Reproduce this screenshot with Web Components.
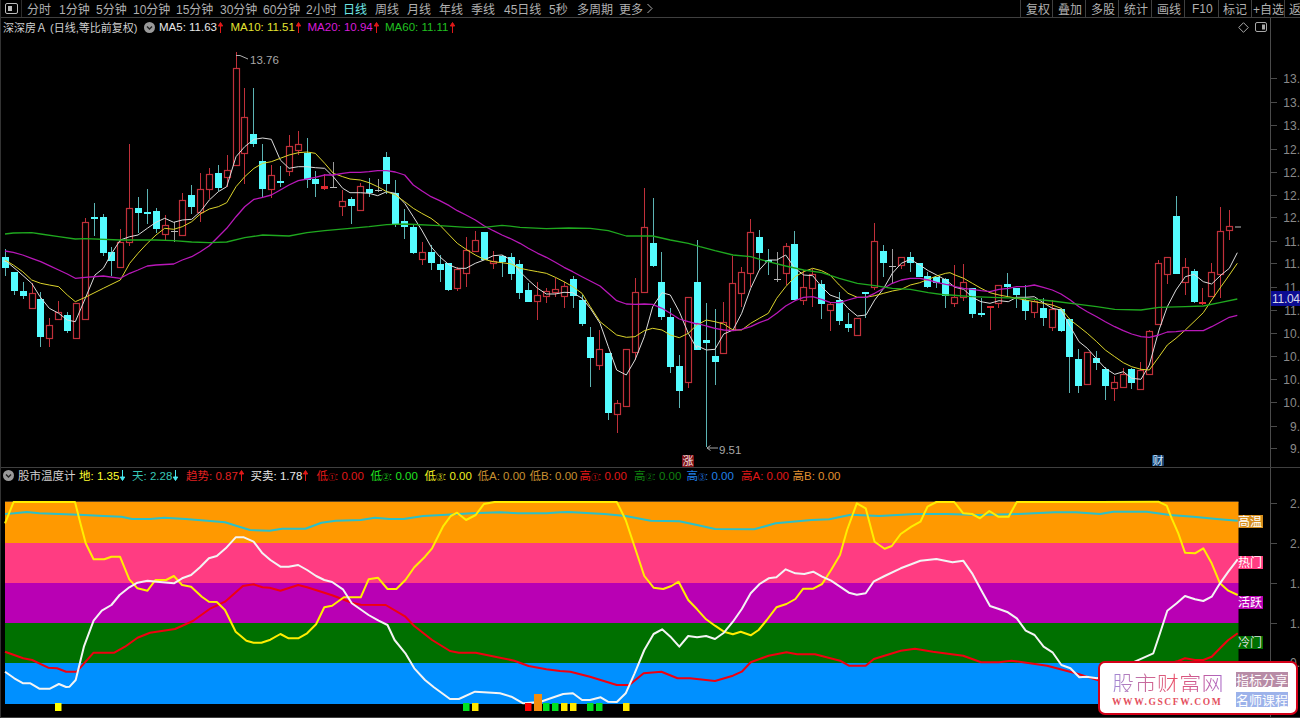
<!DOCTYPE html>
<html lang="zh-CN"><head><meta charset="utf-8"><title>股市温度计</title>
<style>html,body{margin:0;padding:0;background:#000;overflow:hidden}stock-app{display:block}</style></head>
<body><stock-app></stock-app>
<script>
const FONT='"Liberation Sans","Noto Sans CJK SC",sans-serif';
const seg=(ox,oy,sx,sy,a)=>{const r=[];for(let i=0;i<a.length;i+=2)r.push([ox+a[i]/sx,oy+a[i+1]/sy]);return r;};
const poly=(segs)=>{let last=-1,out=[];for(const s of segs)for(const p of s){if(p[0]>last){out.push(p[0].toFixed(1)+','+p[1].toFixed(1));last=p[0];}}return out.join(' ');};

/* ---------- candles: type, high, bodyTop, bodyBottom, low ---------- */
const K=[['c',249,257,268,276],['c',272,272,291,295],['c',282,291,296,299],['r',283,293,308,308],['c',292,299,337,347],['r',318,325,338,347],['r',301,312,319,319],['c',312,315,331,333],['r',303,303,338,339],['r',218,222,319,319],
['c',203,217,218,236],['c',214,217,253,256],['c',247,252,261,276],['r',229,242,267,267],['r',144,208,242,246],['c',197,208,213,233],['c',189,212,213,224],['c',208,211,229,233],['r',215,225,234,241],['g',222,231,232,242],
['r',193,200,235,235],['c',185,195,207,214],['r',173,189,212,222],['r',168,174,189,199],['c',165,173,188,191],['r',155,170,177,187],['r',52,68,165,165],['r',88,117,153,184],['c',88,134,144,147],['c',144,161,189,197],
['r',165,175,189,198],['c',166,181,183,187],['r',135,146,171,176],['r',131,144,150,155],['c',138,153,180,188],['c',171,179,184,197],['R',174,186,189,190],['g',162,187,188,188],['r',190,201,206,216],['c',197,199,206,224],
['r',183,186,210,210],['c',178,189,193,197],['g',179,190,191,192],['c',152,157,184,194],['c',180,193,224,227],['c',209,221,227,239],['c',225,227,253,254],['r',242,252,259,265],['c',245,252,263,270],['c',255,264,270,282],
['c',263,263,290,291],['r',267,269,288,291],['r',237,250,273,287],['r',231,240,251,251],['c',232,232,260,260],['r',251,261,263,269],['c',255,256,262,277],['c',253,257,274,280],['c',260,264,293,299],['c',283,290,302,302],
['r',282,295,301,320],['r',288,291,296,303],['r',278,289,292,297],['r',282,286,296,308],['c',276,279,296,308],['c',295,300,324,326],['c',327,337,358,387],['r',330,349,365,370],['c',353,353,413,420],['r',400,403,414,433],
['r',349,349,406,407],['r',278,292,352,360],['r',188,227,292,292],['c',198,243,266,267],['c',252,282,317,320],['c',308,317,367,373],['c',355,366,391,408],['r',297,297,382,388],['c',240,282,350,350],['c',303,340,343,447],
['c',309,356,362,385],['r',302,322,353,353],['r',256,283,330,330],['r',267,272,293,307],['r',219,232,273,287],['c',230,237,253,270],['c',249,260,262,275],['g',252,279,280,282],['r',243,246,273,285],['c',231,244,300,300],
['r',270,287,300,305],['r',269,274,288,307],['c',280,284,304,319],['r',303,304,310,331],['c',292,300,321,325],['c',313,324,328,332],['r',318,318,335,335],['c',292,292,294,318],['r',223,241,287,290],['c',245,251,263,277],
['g',249,266,267,283],['r',257,257,265,269],['c',252,257,263,272],['c',263,263,277,277],['c',272,276,287,288],['c',277,277,283,288],['c',278,279,296,308],['r',265,297,303,307],['r',264,282,297,301],['c',288,288,314,318],
['c',298,313,315,317],['R',306,306,307,330],['r',285,285,303,308],['c',273,284,287,297],['c',288,288,295,308],['c',285,300,311,320],['r',300,301,312,318],['c',298,308,318,326],['r',300,309,327,331],['c',308,309,331,332],
['c',318,319,357,393],['c',349,359,386,393],['r',352,352,384,384],['c',351,358,363,370],['c',367,369,386,400],['r',376,382,388,401],['r',368,374,387,387],['c',368,369,383,389],['r',362,370,389,389],['r',330,331,374,374],
['r',260,263,324,324],['r',257,257,274,284],['c',196,216,274,274],['r',258,267,282,295],['c',269,271,302,303],['R',288,302,303,305],['r',263,272,296,297],['r',207,231,274,298],['r',210,226,230,240]];

/* ---------- moving averages, traced ---------- */
const MA=[
 ['#dcdcdc',1,poly([seg(0,60,3,3,[10,603,20,605,50,630,95,670,120,710,148,745,176,760,202,780,226,785,256,715,285,645,310,625,335,580,361,540,389,530,414,525,442,505,468,487,494,475,521,487,547,480,575,478,601,455,628,420,655,395,680,380,708,290,734,260,762,238,788,234,814,238,841,300,867,325,895,320,921,320,946,323,974,325,1000,350,1028,385,1050,398]),
  seg(350,140,3,3,[0,155,31,158,57,160,83,167,110,155,136,160,164,190,190,230,215,270,243,320,269,350,298,375,322,385,348,385,376,370,402,360,430,347,456,345,484,360,510,395,535,420,563,445,589,462,616,462,642,457,668,458,696,475,721,505,750,550,775,620,800,690,829,705,855,660,883,590,908,500,936,458,961,465,988,515,1015,580,1040,625]),
  seg(600,180,3,3,[291,497,319,510,345,508,371,462,399,450,425,400,452,325,478,270,505,240,530,240,557,225,585,265,611,285,638,287,665,320,690,345,718,355,744,385,772,408,798,405,824,360,851,325,877,280,904,250,931,238,959,255,985,272,1010,285,1037,300,1050,310]),
  seg(950,180,3,3,[15,322,41,328,67,352,93,365,120,370,147,362,175,365,200,352,226,352,253,350,280,368,307,385,333,390,361,440,387,485,412,505,440,537,466,565,494,583,520,575,545,595,573,598,598,555,627,450,652,380,678,330,706,290,732,283,760,305,785,312,813,285,838,265,862,218])])],
 ['#dcd42c',1,poly([seg(0,60,3,3,[15,600,40,615,68,635,95,660,122,670,148,675,176,680,202,705,226,725,256,712,310,685,361,660,389,610,414,580,442,550,468,525,494,505,521,508,547,500,575,485,601,462,628,447,655,440,680,428,708,380,734,350,762,325,788,310,814,305,841,295,867,285,895,278,921,276,946,280,974,310,1000,340,1028,350,1050,357]),
  seg(350,140,3,3,[0,118,31,120,57,128,83,140,110,155,136,165,164,185,190,205,215,220,243,235,269,255,298,285,322,310,348,328,376,345,402,358,430,365,456,368,484,372,510,385,535,390,563,395,589,400,616,412,642,425,668,440,696,460,721,500,750,545,775,565,800,585,829,592,855,590,883,572,908,565,936,570,961,585,988,593,1015,580,1040,555]),
  seg(600,180,3,3,[291,435,319,420,345,425,371,432,399,450,425,450,452,430,478,415,505,400,530,355,557,320,585,290,611,275,638,265,665,272,690,285,718,315,744,340,772,352,798,352,824,347,851,340,877,333,904,328,931,315,959,308,985,298,1010,288,1037,280,1050,278]),
  seg(950,180,3,3,[15,285,41,295,67,310,93,325,120,338,147,345,175,350,200,355,226,360,253,365,280,370,307,375,333,385,361,420,387,440,412,460,440,485,466,510,494,530,520,548,545,560,573,568,598,570,627,530,652,495,678,475,706,450,732,425,760,398,785,360,813,320,838,285,862,250])])],
 ['#b818b8',1.3,poly([seg(0,60,3,3,[15,573,40,577,68,585,95,595,122,605,148,617,176,630,202,642,226,655,256,652,310,648,361,655,389,640,414,630,442,618,468,615,521,612,547,600,575,590,601,575,628,557,655,530,680,505,708,470,734,440,762,418,788,412,814,405,841,390,867,375,895,362,921,357,946,352,974,345,1000,345,1028,340,1050,337]),
  seg(350,140,3,3,[0,97,31,97,57,95,83,92,110,92,136,96,164,105,190,135,215,152,243,170,269,182,298,197,322,212,348,225,376,240,402,257,430,272,456,285,484,297,510,310,535,325,563,340,589,352,616,367,642,382,668,395,696,410,721,423,750,438,775,460,800,482,829,492,855,493,883,492,908,493,936,505,961,520,988,537,1015,545,1040,552]),
  seg(600,180,3,3,[291,430,319,438,345,445,371,450,399,452,425,448,452,440,478,428,505,418,530,400,557,378,585,362,611,352,638,350,665,358,690,367,718,368,744,360,772,352,798,352,824,340,851,325,877,310,904,300,931,295,959,295,985,300,1010,307,1037,313,1050,315]),
  seg(950,180,3,3,[15,320,41,325,67,328,93,332,120,335,147,328,175,325,200,320,226,320,253,315,280,322,307,330,333,342,361,360,387,380,412,395,440,410,466,425,494,440,520,452,545,462,573,470,598,472,627,465,652,456,678,455,706,452,732,452,760,452,785,440,813,425,838,412,862,406])])],
 ['#1fa81f',1.3,poly([seg(0,60,3,3,[15,522,40,519,95,518,122,522,176,530,226,537,256,536,361,540,468,540,521,542,575,546,628,548,680,546,734,533,788,525,867,528,921,518,974,512,1050,505]),
  seg(350,140,3,3,[0,265,57,260,110,254,164,252,269,257,350,262,402,262,456,256,510,262,589,266,656,264,721,265,775,272,829,288,908,288,961,300,1015,310,1050,320]),
  seg(600,180,3,3,[291,198,345,212,399,225,452,230,505,245,557,258,611,270,665,278,718,295,772,310,824,317,877,325,931,328,985,338,1037,345,1050,345]),
  seg(950,180,3,3,[67,350,147,353,226,355,307,363,387,373,440,380,494,388,573,390,627,382,706,380,760,378,813,367,862,357])])]
];

/* ---------- indicator lines, traced ---------- */
const LINES={
 teal:poly([seg(0,490,2.8,3,[14,72,40,70,75,66,110,70,220,74,290,78,340,80,370,87,420,87,460,83,520,87,580,92,630,97,670,110,700,120,755,122,790,116,855,116,900,98,940,92,1010,90,1050,83,1090,87,1130,87,1185,78,1250,74,1320,70,1400,67,1450,70,1530,70,1568,67]),
  seg(540,490,2.8,3,[80,66,180,72,240,78,310,92,390,94,440,105,490,117,600,118,660,100,760,90,810,88,870,74,950,78,1050,72,1140,72,1230,75,1340,72,1440,67,1500,67,1568,72]),
  seg(1080,500,3,3,[100,35,200,35,270,45,340,50,410,57,473,62])]),
 red:poly([seg(0,490,2.8,3,[14,485,65,505,90,510,135,533,160,535,185,545,215,545,262,488,320,488,350,470,385,443,420,428,490,417,540,393,590,355,630,335,680,288,710,283,735,292,755,293,785,302,835,285,860,292,930,316,985,338,1010,344,1080,345,1135,380,1160,408,1210,450,1260,483,1285,488,1332,488,1400,503,1440,512,1480,528,1530,538,1568,543]),
  seg(540,490,2.8,3,[85,545,140,560,215,585,250,585,290,550,340,545,385,565,420,565,490,573,540,557,565,545,590,517,640,497,690,487,720,493,770,493,840,512,865,527,912,527,935,507,1010,482,1050,476,1100,485,1185,497,1235,517,1285,517,1320,512,1420,527,1500,550,1568,572]),
  seg(1080,500,3,3,[295,483,315,475,345,480,370,480,395,470,420,445,445,420,473,400])]),
 yellow:poly([seg(0,490,2.8,3,[14,100,38,36,210,36,225,100,240,160,262,208,292,208,312,200,336,200,362,268,385,295,413,302,435,270,465,270,487,258,510,285,535,290,565,320,585,335,607,336,630,360,660,425,690,452,710,458,732,458,757,449,785,432,808,445,835,445,860,430,885,403,908,352,930,347,963,322,1010,322,1032,268,1058,263,1085,297,1110,297,1135,270,1160,232,1190,200,1210,175,1240,110,1262,78,1280,68,1305,90,1332,75,1355,42,1385,36,1568,36]),
  seg(540,490,2.8,3,[215,36,240,90,265,170,292,258,318,293,345,297,368,288,388,275,415,330,440,358,465,388,490,407,515,425,540,433,562,425,590,436,612,420,635,390,662,352,690,342,715,327,737,296,765,296,790,282,815,240,840,195,860,120,887,40,912,55,937,155,965,176,985,168,1010,132,1040,110,1065,95,1085,50,1110,36,1160,36,1185,70,1210,72,1232,85,1258,63,1283,80,1312,80,1335,36,1568,36]),
  seg(1080,500,3,3,[235,5,260,17,275,55,295,100,315,158,345,160,370,145,395,190,420,250,445,272,473,285])]),
 white:poly([seg(0,490,2.8,3,[14,545,40,565,65,580,85,580,110,596,140,596,165,582,185,591,195,590,212,570,235,470,262,392,285,362,312,345,335,315,362,292,385,278,413,272,440,275,487,280,510,265,535,255,560,232,585,205,607,198,632,175,660,142,683,142,710,155,735,190,757,210,785,230,808,230,835,225,860,240,885,258,908,270,930,276,960,298,985,340,1032,375,1060,392,1085,405,1105,450,1135,490,1160,535,1190,570,1215,592,1260,627,1285,627,1330,605,1355,607,1400,610,1432,620,1465,640]),
  seg(540,490,2.8,3,[0,636,30,625,65,612,92,610,118,630,140,630,170,622,190,635,215,636,240,610,265,550,292,480,318,432,342,418,365,440,390,470,415,438,440,442,465,438,490,447,515,428,540,395,565,357,590,310,615,282,640,265,662,262,688,238,715,250,740,252,765,245,790,260,815,272,840,290,865,308,887,314,912,310,935,274,965,258,1010,235,1065,212,1110,207,1155,217,1185,212,1210,250,1235,300,1260,348,1285,357,1310,367,1335,385,1360,422,1385,435,1410,470,1435,487,1460,525,1485,535,1510,562,1530,560,1560,565]),
  seg(1080,500,3,3,[220,460,240,400,262,332,290,310,315,288,345,298,370,303,395,290,420,250,445,215,473,178])])
};

/* ---------- small elements ---------- */
class LegendTag extends HTMLElement{
  connectedCallback(){
    const c=this.getAttribute('c')||'#ccc',w=this.getAttribute('w'),ar=this.getAttribute('arrow'),ac=this.getAttribute('ac')||'#e01818';
    const arrow=ar==='up'?`<svg width="5" height="11" viewBox="0 0 5 11"><path d="M2.5 11V1M.3 4L2.5.5 4.7 4z" fill="${ac}" stroke="${ac}" stroke-width="1"/></svg>`
      :ar==='down'?`<svg width="5" height="11" viewBox="0 0 5 11"><path d="M2.5 0V10M.3 7L2.5 10.5 4.7 7z" fill="${ac}" stroke="${ac}" stroke-width="1"/></svg>`:'';
    this.attachShadow({mode:'open'}).innerHTML=`<style>:host{display:flex;align-items:center;flex:0 0 ${w}px;width:${w}px;color:${c};white-space:nowrap;gap:1px}
      svg{display:block}</style><span><slot></slot></span>${arrow}`;
  }
}
customElements.define('legend-tag',LegendTag);

class ToolBar extends HTMLElement{
  connectedCallback(){
    const L=[['分时',32],['1分钟',37],['5分钟',37],['10分钟',43],['15分钟',44],['30分钟',43],['60分钟',43],['2小时',37],['日线',32,1],['周线',32],['月线',32],['年线',32],['季线',33],['45日线',45],['5秒',28],['多周期',42],['更多',27]];
    const R=[['复权',5],['叠加',5],['多股',5],['统计',5],['画线',5],['F10',7],['标记',4],['+自选',1],['返',4]];
    const W=[32,33,33,33,33,34,33,33,16];
    this.attachShadow({mode:'open'}).innerHTML=`<style>
      :host{display:flex;height:17px;border-bottom:1px solid #3f3f3f;color:#b0b0b0;font:12px ${FONT};align-items:stretch;overflow:hidden;flex:none}
      .ic{flex:0 0 21px;display:flex;align-items:center;padding-left:4px;box-sizing:border-box;border-right:1px solid #2c2c2c}
      .tabs{display:flex;align-items:center;padding-left:5px}
      .tabs span{white-space:nowrap;flex:none}
      .on{color:#6fe6e6}
      .chev{display:block;margin-left:0}
      .right{margin-left:auto;display:flex}
      .right span{border-left:1px solid #3f3f3f;display:flex;align-items:center;box-sizing:border-box;white-space:nowrap;flex:none}
    </style>
    <div class="ic"><svg width="13" height="11" viewBox="0 0 13 11"><rect x=".5" y=".5" width="12" height="10" rx="1.5" fill="none" stroke="#bbb"/><rect x="3" y="3" width="4" height="5" fill="#bbb"/></svg></div>
    <div class="tabs">${L.map(t=>`<span class="${t[2]?'on':''}" style="width:${t[1]}px">${t[0]}</span>`).join('')}
      <svg class="chev" width="8" height="11" viewBox="0 0 8 11"><path d="M1.5 1L6 5.5 1.5 10" fill="none" stroke="#b0b0b0"/></svg></div>
    <div class="right">${R.map((t,i)=>`<span style="width:${W[i]}px;padding-left:${t[1]}px">${t[0]}</span>`).join('')}</div>`;
  }
}
customElements.define('tool-bar',ToolBar);

/* value axis: real text on a free scale */
class ValueAxis extends HTMLElement{
  connectedCallback(){
    const top=+this.getAttribute('top'),h=+this.getAttribute('h');
    const ticks=JSON.parse(this.getAttribute('ticks'));
    const tag=this.getAttribute('tag');
    let s=ticks.map(t=>`<line x1="0" x2="6" y1="${t[0]+.5}" y2="${t[0]+.5}" stroke="#4a4a4a"/><text x="29" y="${t[0]+4.5}" text-anchor="end" fill="#8a8a8a">${t[1]}</text>`).join('');
    if(tag)s+=`<rect x="0" y="291" width="29" height="15" fill="#0c0c92"/><text x="1" y="303" fill="#d8d8e8" textLength="28">${tag}</text>`;
    this.attachShadow({mode:'open'}).innerHTML=`<style>:host{display:block;flex:0 0 29px;width:29px;border-left:1px solid #4a4a4a;overflow:hidden}
      svg{display:block;font:12px ${FONT}}</style><svg width="29" height="${h}" viewBox="0 ${top} 29 ${h}">${s}</svg>`;
  }
}
customElements.define('value-axis',ValueAxis);

class PricePanel extends HTMLElement{
  connectedCallback(){
    const xs=i=>5+8.87*i;
    let c='';
    K.forEach((k,i)=>{
      const x=xs(i),cx=Math.round(x)+.5,[t,hi,top,bot,lo]=k,l=Math.round(x-3)+.5;
      if(t==='c'){
        c+=`<line x1="${cx}" x2="${cx}" y1="${hi}" y2="${lo}" stroke="#5cb4b4"/><rect x="${l-.5}" y="${top}" width="7" height="${Math.max(bot-top,2)}" fill="#54fcff"/>`;
      }else if(t==='g'){
        c+=`<line x1="${cx}" x2="${cx}" y1="${hi}" y2="${lo}" stroke="#9a9a9a"/><line x1="${l-.5}" x2="${l+6.5}" y1="${top+.5}" y2="${top+.5}" stroke="#b8b8b8"/>`;
      }else if(t==='R'){
        c+=`<line x1="${cx}" x2="${cx}" y1="${hi}" y2="${lo}" stroke="#c0303a"/><rect x="${l-.5}" y="${top}" width="7" height="${Math.max(bot-top,2)}" fill="#e02830"/>`;
      }else{
        if(hi<top)c+=`<line x1="${cx}" x2="${cx}" y1="${hi}" y2="${top}" stroke="#c0303a"/>`;
        if(lo>bot)c+=`<line x1="${cx}" x2="${cx}" y1="${bot}" y2="${lo}" stroke="#c0303a"/>`;
        c+=`<rect x="${l}" y="${top+.5}" width="6" height="${bot-top}" fill="#000" stroke="#c0303a" stroke-width="1.2"/>`;
      }
    });
    const lines=MA.map(([col,w,p])=>`<polyline points="${p}" fill="none" stroke="${col}" stroke-width="${w}" stroke-linejoin="round"/>`).join('');
    const ticks=[[78,'13.'],[102,'13.'],[125,'13.'],[149,'12.'],[172,'12.'],[195,'12.'],[217,'12.'],[241,'11.'],[263,'11.'],[287,'11.'],[310,'11.'],[333,'10.'],[356,'10.'],[379,'10.'],[402,'10.'],[426,'9.'],[448,'9.']];
    this.attachShadow({mode:'open'}).innerHTML=`<style>
      :host{display:flex;flex:none;height:449px;border-bottom:1px solid #3f3f3f;font:11.5px ${FONT}}
      .col{flex:0 0 1269px;width:1269px;display:flex;flex-direction:column;overflow:hidden}
      .leg{display:flex;align-items:center;height:18px;flex:none;padding-left:2px;box-sizing:border-box;position:relative}
      .name{flex:0 0 141px;color:#cfcfcf;white-space:nowrap;font-size:11px}
      .dot{flex:0 0 15px;display:flex}
      .tools{margin-left:auto;display:flex;gap:6px;align-items:center;padding-right:3px}
      svg{display:block}
      .chart{font:11.5px ${FONT}}
    </style>
    <div class="col">
      <div class="leg">
        <span class="name">深深房Ａ (日线,等比前复权)</span>
        <span class="dot"><svg width="11" height="11" viewBox="0 0 11 11"><circle cx="5.5" cy="5.5" r="5.5" fill="#9a9a9a"/><path d="M3 4.5L5.5 7 8 4.5" fill="none" stroke="#222" stroke-width="1.4"/></svg></span>
        <legend-tag c="#e8e8e8" w="71.5" arrow="up">MA5: 11.63</legend-tag>
        <legend-tag c="#e4e430" w="77" arrow="up">MA10: 11.51</legend-tag>
        <legend-tag c="#d81cd8" w="77.5" arrow="up">MA20: 10.94</legend-tag>
        <legend-tag c="#20c020" w="77" arrow="up">MA60: 11.11</legend-tag>
        <span class="tools">
          <svg width="11" height="11" viewBox="0 0 11 11"><path d="M5.5 .7L10.300 5.500 5.500 10.300 .7 5.500z" fill="none" stroke="#a8a8a8"/></svg>
          <svg width="12" height="10" viewBox="0 0 12 10"><rect x=".5" y=".5" width="11" height="9" rx="1.5" fill="none" stroke="#a8a8a8"/><rect x="7" y="2.5" width="3" height="5" fill="#a8a8a8"/></svg>
        </span>
      </div>
      <svg class="chart" width="1269" height="431" viewBox="1 36 1269 431">
        ${c}${lines}
        <line x1="1235" x2="1241" y1="227" y2="227" stroke="#bbb"/>
        <path d="M236 55.5h4M240 55.5l8 3.5" fill="none" stroke="#b0b0b0"/>
        <text x="250" y="63.5" fill="#a8a8a8">13.76</text>
        <path d="M707 448h11M707 448l3.500-2.500M707 448l3.500 2.500" fill="none" stroke="#a8a8a8"/>
        <text x="719" y="454" fill="#a8a8a8">9.51</text>
        <rect x="682" y="455" width="12" height="12" rx="1" fill="#801014"/>
        <text x="682.500" y="465" fill="#f0e4e4" font-size="11">涨</text>
        <rect x="1152" y="455" width="12" height="11" rx="1" fill="#14406e"/>
        <text x="1152.500" y="465" fill="#cfe6ff" font-size="11">财</text>
      </svg>
    </div>
    <value-axis top="18" h="449" ticks='${JSON.stringify(ticks)}' tag="11.04"></value-axis>`;
  }
}
customElements.define('price-panel',PricePanel);

class TempPanel extends HTMLElement{
  connectedCallback(){
    const bands=[[502,41,'#ff9900'],[543,40,'#ff3c82'],[583,40,'#b900b4'],[623,40,'#007000'],[663,41,'#0090ff']];
    const b=bands.map(r=>`<rect x="5" y="${r[0]}" width="1233.500" height="${r[1]}" fill="${r[2]}"/>`).join('');
    const labels=[[515,'高温','#d68d1c','#fff'],[556,'热门','#ff3c82','#fff'],[596,'活跃','#b900b4','#fff'],[636,'冷门','#007000','#ddd']];
    const lb=labels.map(l=>`<rect x="1238" y="${l[0]}" width="25" height="13" fill="${l[2]}"/><text x="1238" y="${l[0]+11}" fill="${l[3]}">${l[1]}</text>`).join('');
    const sig=[[6,'#ffff00'],[52,'#00e020'],[53,'#ffe800'],[59,'#ff0000'],[61,'#00e020'],[62,'#00e020'],[63,'#ffe800'],[64,'#ffe800'],[66,'#00e020'],[67,'#00e020'],[70,'#ffe800']];
    const s=sig.map(q=>`<rect x="${Math.round(5+8.87*q[0]-3)}" y="703" width="6.500" height="8" fill="${q[1]}"/>`).join('');
    const ln=(p,c,w)=>`<polyline points="${p}" fill="none" stroke="${c}" stroke-width="${w}" stroke-linejoin="round"/>`;
    const ticks=[[503,'2.'],[543,'2.'],[583,'1.'],[623,'1.'],[662,'0.']];
    this.attachShadow({mode:'open'}).innerHTML=`<style>
      :host{display:flex;flex:none;height:249px;border-bottom:1px solid #3f3f3f;font:11.5px ${FONT}}
      .col{flex:0 0 1269px;width:1269px;display:flex;flex-direction:column;overflow:hidden}
      .leg{display:flex;align-items:center;height:14px;flex:none;padding-left:2px;box-sizing:border-box}
      .dot{flex:0 0 15px;display:flex}
      .nm{flex:0 0 61px;color:#d0d0d0;white-space:nowrap}
      svg{display:block}
      .chart{font:12px ${FONT}}
      i{font-style:normal;font-size:8px;display:inline-block;width:7px;overflow:visible}
    </style>
    <div class="col">
      <div class="leg">
        <span class="dot"><svg width="11" height="11" viewBox="0 0 11 11"><circle cx="5.5" cy="5.5" r="5.5" fill="#9a9a9a"/><path d="M3 4.5L5.5 7 8 4.5" fill="none" stroke="#222" stroke-width="1.4"/></svg></span>
        <span class="nm">股市温度计</span>
        <legend-tag c="#ffff30" w="53" arrow="down" ac="#48e8f0">地: 1.35</legend-tag>
        <legend-tag c="#38c8b8" w="54" arrow="down" ac="#48e8f0">天: 2.28</legend-tag>
        <legend-tag c="#e02020" w="64.500" arrow="up">趋势: 0.87</legend-tag>
        <legend-tag c="#e8e8e8" w="66" arrow="up">买卖: 1.78</legend-tag>
        <legend-tag c="#e01818" w="54">低<i>①</i>: 0.00</legend-tag>
        <legend-tag c="#20e020" w="54">低<i>②</i>: 0.00</legend-tag>
        <legend-tag c="#f0f020" w="53">低<i>③</i>: 0.00</legend-tag>
        <legend-tag c="#c89030" w="52">低A: 0.00</legend-tag>
        <legend-tag c="#c89030" w="50">低B: 0.00</legend-tag>
        <legend-tag c="#e01818" w="54.500">高<i>①</i>: 0.00</legend-tag>
        <legend-tag c="#108010" w="52.500">高<i>②</i>: 0.00</legend-tag>
        <legend-tag c="#2080e8" w="54.500">高<i>③</i>: 0.00</legend-tag>
        <legend-tag c="#e01818" w="51.500">高A: 0.00</legend-tag>
        <legend-tag c="#e09030" w="50">高B: 0.00</legend-tag>
      </div>
      <svg class="chart" width="1269" height="235" viewBox="1 482 1269 235">
        <rect x="5" y="501.500" width="1233.500" height="1" fill="#b08040"/>
        ${b}
        ${ln(LINES.teal,'#2cc0c8',2)}
        ${ln(LINES.red,'#f00010',2)}
        ${ln(LINES.yellow,'#ffee00',2)}
        ${ln(LINES.white,'#f4f4f4',2)}
        ${s}
        <rect x="534" y="694" width="8" height="17" fill="#f48c0c"/>
        ${lb}
      </svg>
    </div>
    <value-axis top="468" h="249" ticks='${JSON.stringify(ticks)}'></value-axis>`;
  }
}
customElements.define('temp-panel',TempPanel);

class SiteBadge extends HTMLElement{
  connectedCallback(){
    this.attachShadow({mode:'open'}).innerHTML=`<style>
      :host{position:absolute;left:1097px;top:661px;width:200px;height:54px;box-sizing:border-box;background:#fff;border:2px solid #d40018;border-radius:7px;display:flex;padding:9px 6px 0 12px;gap:12px}
      .l{display:flex;flex-direction:column;gap:4px;flex:none;width:112px}
      .big{font:300 22px/20px "Noto Sans CJK SC",sans-serif;letter-spacing:.4px;white-space:nowrap;background:linear-gradient(90deg,#a08ad8,#e8506a 55%,#a868c8);-webkit-background-clip:text;background-clip:text;color:transparent}
      .url{font:bold 9.5px/12px "Liberation Serif",serif;letter-spacing:1.6px;color:#e4505e;white-space:nowrap}
      .r{display:flex;flex-direction:column;gap:5px;flex:none;width:52px;margin-top:0}
      .r span{display:block;height:15px;font:13px/15px "Noto Sans CJK SC",sans-serif;color:#fff;text-align:center;white-space:nowrap}
      .a{background:#b78ba6}.b{background:#9cb2ea}
    </style>
    <div class="l"><div class="big">股市财富网</div><div class="url">WWW.GSCFW.COM</div></div>
    <div class="r"><span class="a">指标分享</span><span class="b">名师课程</span></div>`;
  }
}
customElements.define('site-badge',SiteBadge);

class StockApp extends HTMLElement{
  connectedCallback(){
    this.attachShadow({mode:'open'}).innerHTML=`<style>
      :host{display:flex;flex-direction:column;width:1300px;height:718px;box-sizing:border-box;background:#000;border-left:1px solid #333;position:relative;overflow:hidden;font-family:${FONT}}
    </style><tool-bar></tool-bar><price-panel></price-panel><temp-panel></temp-panel><site-badge></site-badge>`;
  }
}
customElements.define('stock-app',StockApp);
</script></body></html>
